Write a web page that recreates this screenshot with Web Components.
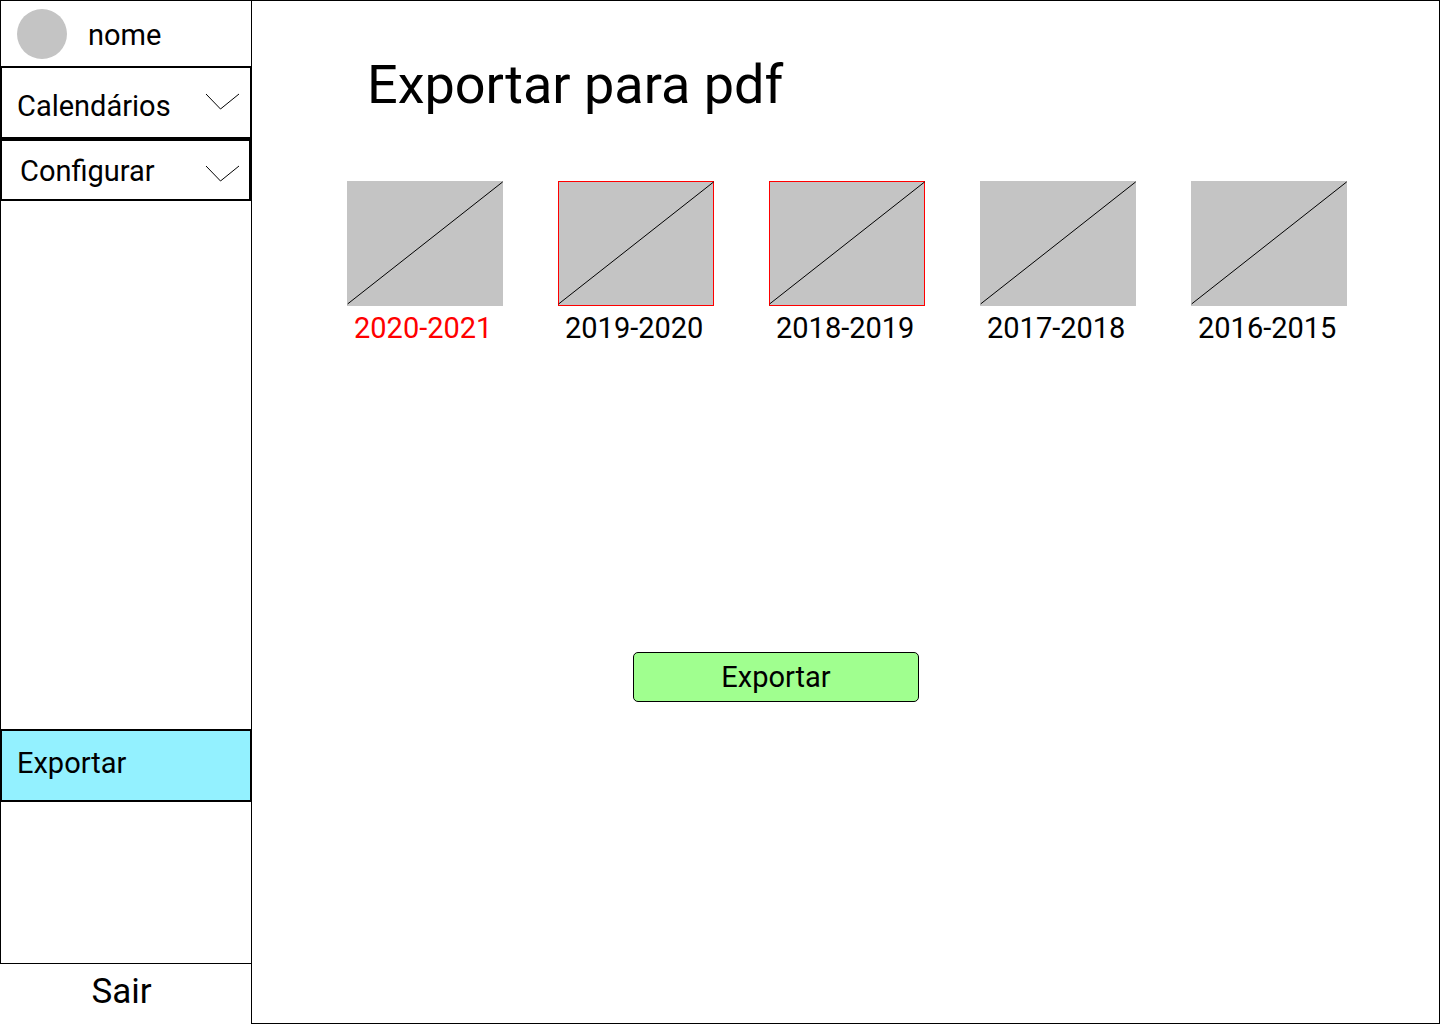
<!DOCTYPE html>
<html lang="pt">
<head>
<meta charset="utf-8">
<meta name="viewport" content="width=device-width, initial-scale=1">
<title>Exportar para pdf</title>
<style>
body { margin: 0; background: #fff; color: #000; font: 29px/37px Roboto, "Liberation Sans", sans-serif; }
</style>
</head>
<body>
<app-shell>
  <side-bar slot="side">
    <user-badge slot="user">nome</user-badge>
    <nav-item class="tall" chevron>Calendários</nav-item>
    <nav-item class="short" chevron>Configurar</nav-item>
    <nav-item class="current">Exportar</nav-item>
    <a slot="exit" href="#sair">Sair</a>
  </side-bar>
  <export-page>
    <span slot="title">Exportar para pdf</span>
    <year-card highlight>2020-2021</year-card>
    <year-card outlined>2019-2020</year-card>
    <year-card outlined>2018-2019</year-card>
    <year-card>2017-2018</year-card>
    <year-card>2016-2015</year-card>
    <action-button slot="action">Exportar</action-button>
  </export-page>
</app-shell>
<script>
const define = (name, html) => customElements.define(name, class extends HTMLElement {
  constructor() {
    super();
    this.attachShadow({ mode: "open" }).innerHTML = html;
  }
});

define("app-shell", `
<style>
  :host { display: grid; grid-template-columns: 252px 1fr; min-height: 100vh; }
</style>
<slot name="side"></slot><slot></slot>`);

define("side-bar", `
<style>
  :host { display: flex; flex-direction: column; box-sizing: border-box; border-right: 1px solid #000; }
  nav { flex: 1; display: flex; flex-direction: column; border: 1px solid #000; border-right: 0; }
  ::slotted(nav-item) { margin: 0 -1px; }
  ::slotted(.tall) { height: 73px; --pad: 20px; }
  ::slotted(.short) { height: 62px; margin-right: 0; --pad: 12px; --inset: 18px; --icon-top: 24px; --icon-right: 9px; }
  ::slotted(.current) { height: 73px; margin-top: auto; margin-bottom: 161px; --pad: 14px; --fill: #93f1ff; }
  footer { display: flex; justify-content: center; height: 60px; padding-right: 8px; }
  ::slotted(a) { color: inherit; text-decoration: none; font-size: 35px; line-height: 56px; }
</style>
<nav><slot name="user"></slot><slot></slot></nav>
<footer><slot name="exit"></slot></footer>`);

define("user-badge", `
<style>
  :host { display: flex; align-items: center; gap: 21px; height: 65px; padding-left: 16px; }
  i { width: 50px; height: 50px; border-radius: 50%; background: #c4c4c4; }
  span { padding-top: 4px; }
</style>
<i></i><span><slot></slot></span>`);

define("nav-item", `
<style>
  :host { display: block; }
  button { display: flex; align-items: flex-start; justify-content: space-between; box-sizing: border-box; width: 100%; height: 100%;
    margin: 0; padding: var(--pad) var(--icon-right, 10px) 0 var(--inset, 15px); border: 2px solid #000;
    background: var(--fill, #fff); color: inherit; font: inherit; text-align: left; cursor: pointer; }
  svg { display: none; width: 35px; height: 17px; margin-top: calc(var(--icon-top, 25px) - var(--pad)); fill: none; stroke: #000; }
  :host([chevron]) svg { display: block; }
</style>
<button type="button"><span><slot></slot></span>
<svg viewBox="0 0 35 17" aria-hidden="true"><path d="M1 1 15.500 16 34 1"/></svg></button>`);

define("export-page", `
<style>
  :host { display: block; }
  main { box-sizing: border-box; min-height: 100%; padding: 50px 20px 50px 95px; border: 1px solid #000; border-left: 0; }
  h1 { margin: 0 0 62px 20px; font-size: 54px; line-height: 68px; font-weight: 400; }
  section { display: flex; flex-wrap: wrap; gap: 55px; margin-bottom: 305px; }
  footer { padding-left: 286px; }
</style>
<main>
  <h1><slot name="title"></slot></h1>
  <section><slot></slot></section>
  <footer><slot name="action"></slot></footer>
</main>`);

define("year-card", `
<style>
  :host { display: block; }
  button { display: flex; flex-direction: column; align-items: flex-start; gap: 4px; padding: 0; border: 0; background: none; color: inherit; font: inherit; cursor: pointer; }
  :host([highlight]) button { color: #f00; }
  svg { display: block; width: 156px; height: 125px; background: #c4c4c4; }
  rect { display: none; fill: none; stroke: #f00; }
  :host([outlined]) rect { display: block; }
  path { stroke: #000; }
  span { padding-left: 7px; }
</style>
<button type="button">
  <svg viewBox="0 0 156 125" aria-hidden="true"><rect x=".5" y=".5" width="155" height="124"/><path d="M.7 122.900 155.700 .9"/></svg>
  <span><slot></slot></span>
</button>`);

define("action-button", `
<style>
  :host { display: block; }
  button { box-sizing: border-box; width: 286px; height: 50px; padding: 0; border: 1px solid #000; border-radius: 5px;
    background: #a0ff8f; color: inherit; font: inherit; cursor: pointer; }
</style>
<button type="button"><slot></slot></button>`);
</script>
</body>
</html>
